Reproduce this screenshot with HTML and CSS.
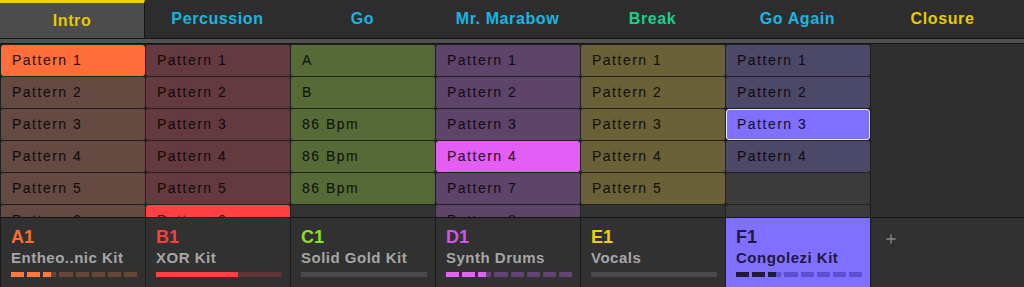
FILE: index.html
```html
<!DOCTYPE html>
<html lang="en">
<head>
    <meta charset="UTF-8">
    <title>Arranger</title>
    <link rel="stylesheet" href="styles.css">
</head>
<body>
    <div class="app">
        <div class="scenes">
            <div class="scene active yellow">Intro</div>
            <div class="scene cyan">Percussion</div>
            <div class="scene cyan">Go</div>
            <div class="scene cyan">Mr. Marabow</div>
            <div class="scene green">Break</div>
            <div class="scene cyan">Go Again</div>
            <div class="scene yellow">Closure</div>
            <div class="scene rest"></div>
        </div>
        <div class="strip"></div>

        <div class="arranger">
            <div class="track t-a">
                <div class="cell sel-a">Pattern 1</div>
                <div class="cell">Pattern 2</div>
                <div class="cell">Pattern 3</div>
                <div class="cell">Pattern 4</div>
                <div class="cell">Pattern 5</div>
                <div class="cell">Pattern 6</div>
            </div>
            <div class="track t-b">
                <div class="cell">Pattern 1</div>
                <div class="cell">Pattern 2</div>
                <div class="cell">Pattern 3</div>
                <div class="cell">Pattern 4</div>
                <div class="cell">Pattern 5</div>
                <div class="cell sel-b">Pattern 6</div>
            </div>
            <div class="track t-c">
                <div class="cell">A</div>
                <div class="cell">B</div>
                <div class="cell">86 Bpm</div>
                <div class="cell">86 Bpm</div>
                <div class="cell">86 Bpm</div>
                <div class="cell empty dark"></div>
            </div>
            <div class="track t-d">
                <div class="cell">Pattern 1</div>
                <div class="cell">Pattern 2</div>
                <div class="cell">Pattern 3</div>
                <div class="cell sel-d">Pattern 4</div>
                <div class="cell">Pattern 7</div>
                <div class="cell">Pattern 8</div>
            </div>
            <div class="track t-e">
                <div class="cell">Pattern 1</div>
                <div class="cell">Pattern 2</div>
                <div class="cell">Pattern 3</div>
                <div class="cell">Pattern 4</div>
                <div class="cell">Pattern 5</div>
                <div class="cell empty dark"></div>
            </div>
            <div class="track t-f">
                <div class="cell">Pattern 1</div>
                <div class="cell">Pattern 2</div>
                <div class="cell sel-f">Pattern 3</div>
                <div class="cell">Pattern 4</div>
                <div class="cell empty"></div>
                <div class="cell empty"></div>
            </div>
            <div class="track blank"></div>
        </div>

        <div class="groups">
            <div class="group g-a">
                <div class="code">A1</div>
                <div class="name">Entheo..nic Kit</div>
                <div class="bar steps">
                    <span class="on"></span><span class="on"></span><span class="half"></span><span></span>
                    <span></span><span></span><span></span><span></span>
                </div>
            </div>
            <div class="group g-b">
                <div class="code">B1</div>
                <div class="name">XOR Kit</div>
                <div class="bar level"><span style="width: 65%"></span></div>
            </div>
            <div class="group g-c">
                <div class="code">C1</div>
                <div class="name">Solid Gold Kit</div>
                <div class="bar level"><span style="width: 0%"></span></div>
            </div>
            <div class="group g-d">
                <div class="code">D1</div>
                <div class="name">Synth Drums</div>
                <div class="bar steps">
                    <span class="on"></span><span class="on"></span><span class="half"></span><span></span>
                    <span></span><span></span><span></span><span></span>
                </div>
            </div>
            <div class="group g-e">
                <div class="code">E1</div>
                <div class="name">Vocals</div>
                <div class="bar level"><span style="width: 0%"></span></div>
            </div>
            <div class="group g-f">
                <div class="code">F1</div>
                <div class="name">Congolezi Kit</div>
                <div class="bar steps">
                    <span class="on"></span><span class="on"></span><span class="half"></span><span></span>
                    <span></span><span></span><span></span><span></span>
                </div>
            </div>
            <div class="group add">
                <svg width="10" height="10" viewBox="0 0 10 10">
                    <path d="M5 0.5V9.5M0.5 5H9.5" stroke="#8a8a8a" stroke-width="1.3" fill="none"/>
                </svg>
            </div>
        </div>
    </div>
</body>
</html>
```

FILE: styles.css
```css
* {
    margin: 0;
    padding: 0;
    box-sizing: border-box;
}

body {
    background: #2f2f2f;
    font-family: 'Liberation Sans', Arial, sans-serif;
    overflow: hidden;
}

.app {
    width: 1024px;
    height: 287px;
    display: flex;
    flex-direction: column;
    overflow: hidden;
}

/* scene tabs */

.scenes {
    display: flex;
    height: 38px;
    background: #2d2d2d;
}

.scene {
    width: 145px;
    flex: none;
    text-align: center;
    font-size: 16px;
    font-weight: bold;
    letter-spacing: 0.6px;
    line-height: 38px;
}

.scene.active {
    background: #4c4c4c;
    border-top: 3px solid #f2cf00;
    border-right: 1px solid #151515;
    line-height: 35px;
}

.scene.rest {
    flex: 1;
}

.yellow { color: #e8c900; }
.cyan { color: #17b6e2; }
.green { color: #1ccd8e; }

.strip {
    height: 6px;
    background: #505050;
    border-top: 1px solid #151515;
    border-bottom: 1px solid #151515;
}

/* pattern grid */

.arranger {
    display: flex;
    height: 174px;
    border-bottom: 1px solid #151515;
    overflow: hidden;
}

.track {
    width: 145px;
    flex: none;
    display: flex;
    flex-direction: column;
    gap: 1px;
    padding-top: 1px;
    background: #222;
    border-left: 1px solid #222;
}

.track.blank {
    flex: 1;
    background: #2f2f2f;
    border-left: 1px solid #1e1e1e;
}

.cell {
    height: 31px;
    flex: none;
    padding-left: 11px;
    font-size: 14px;
    letter-spacing: 1.5px;
    line-height: 31px;
    color: rgba(8, 6, 6, 0.88);
    -webkit-text-stroke: 0.2px rgba(8, 6, 6, 0.6);
    border-radius: 2px;
}

.t-a .cell { background: #644a40; }
.t-b .cell { background: #633a3f; }
.t-c .cell { background: #566a37; }
.t-d .cell { background: #5e4468; }
.t-e .cell { background: #6a6139; }
.t-f .cell { background: #4c4868; }

.track .cell.empty { background: #3b3b3b; }
.track .cell.empty.dark { background: #333; }

.track .sel-a { background: #ff6d3b; border-radius: 3px; }
.track .sel-b { background: #ff4141; border-radius: 3px; }
.track .sel-d { background: #e35ef5; border-radius: 3px; }
.track .sel-f {
    background: #8070ff;
    border: 1px solid #ececff;
    border-radius: 3px;
    padding-left: 10px;
    line-height: 29px;
}

/* groups */

.groups {
    display: flex;
    flex: 1;
    background: #313131;
}

.group {
    width: 145px;
    flex: none;
    border-left: 1px solid #1c1c1c;
    padding: 9px 0 0 10px;
}

.group.add {
    flex: 1;
    padding: 12px 0 0 15px;
}

.code {
    font-size: 18px;
    font-weight: bold;
    line-height: 20px;
}

.name {
    margin-top: 2px;
    font-size: 15px;
    font-weight: bold;
    letter-spacing: 0.5px;
    line-height: 18px;
    color: #a6a6a6;
    white-space: nowrap;
}

.bar {
    margin-top: 5px;
    width: 126px;
    height: 5px;
}

.bar.steps {
    display: grid;
    grid-template-columns: repeat(8, 1fr);
    gap: 3px;
}

.bar.level {
    background: #4a4a4a;
}

.bar.level span {
    display: block;
    height: 100%;
}

.g-a .code { color: #ff6b2c; }
.g-a .steps span { background: #6a4537; }
.g-a .steps .on { background: #ff7a3c; }
.g-a .steps .half { background: linear-gradient(90deg, #ff7a3c 60%, #6a4537 60%); }

.g-b .code { color: #ff3d3d; }
.g-b .level { background: #5e3236; }
.g-b .level span { background: #ff4141; }

.g-c .code { color: #8fdf1f; }

.g-d .code { color: #d452ea; }
.g-d .steps span { background: #66427a; }
.g-d .steps .on { background: #e262f4; }
.g-d .steps .half { background: linear-gradient(90deg, #e262f4 60%, #66427a 60%); }

.g-e .code { color: #eed000; }

.g-f {
    background: #8070ff;
}

.g-f .code,
.g-f .name { color: #1e1a3e; }
.g-f .steps span { background: #5d50cf; }
.g-f .steps .on { background: #1e1a3e; }
.g-f .steps .half { background: linear-gradient(90deg, #1e1a3e 60%, #5d50cf 60%); }
```
